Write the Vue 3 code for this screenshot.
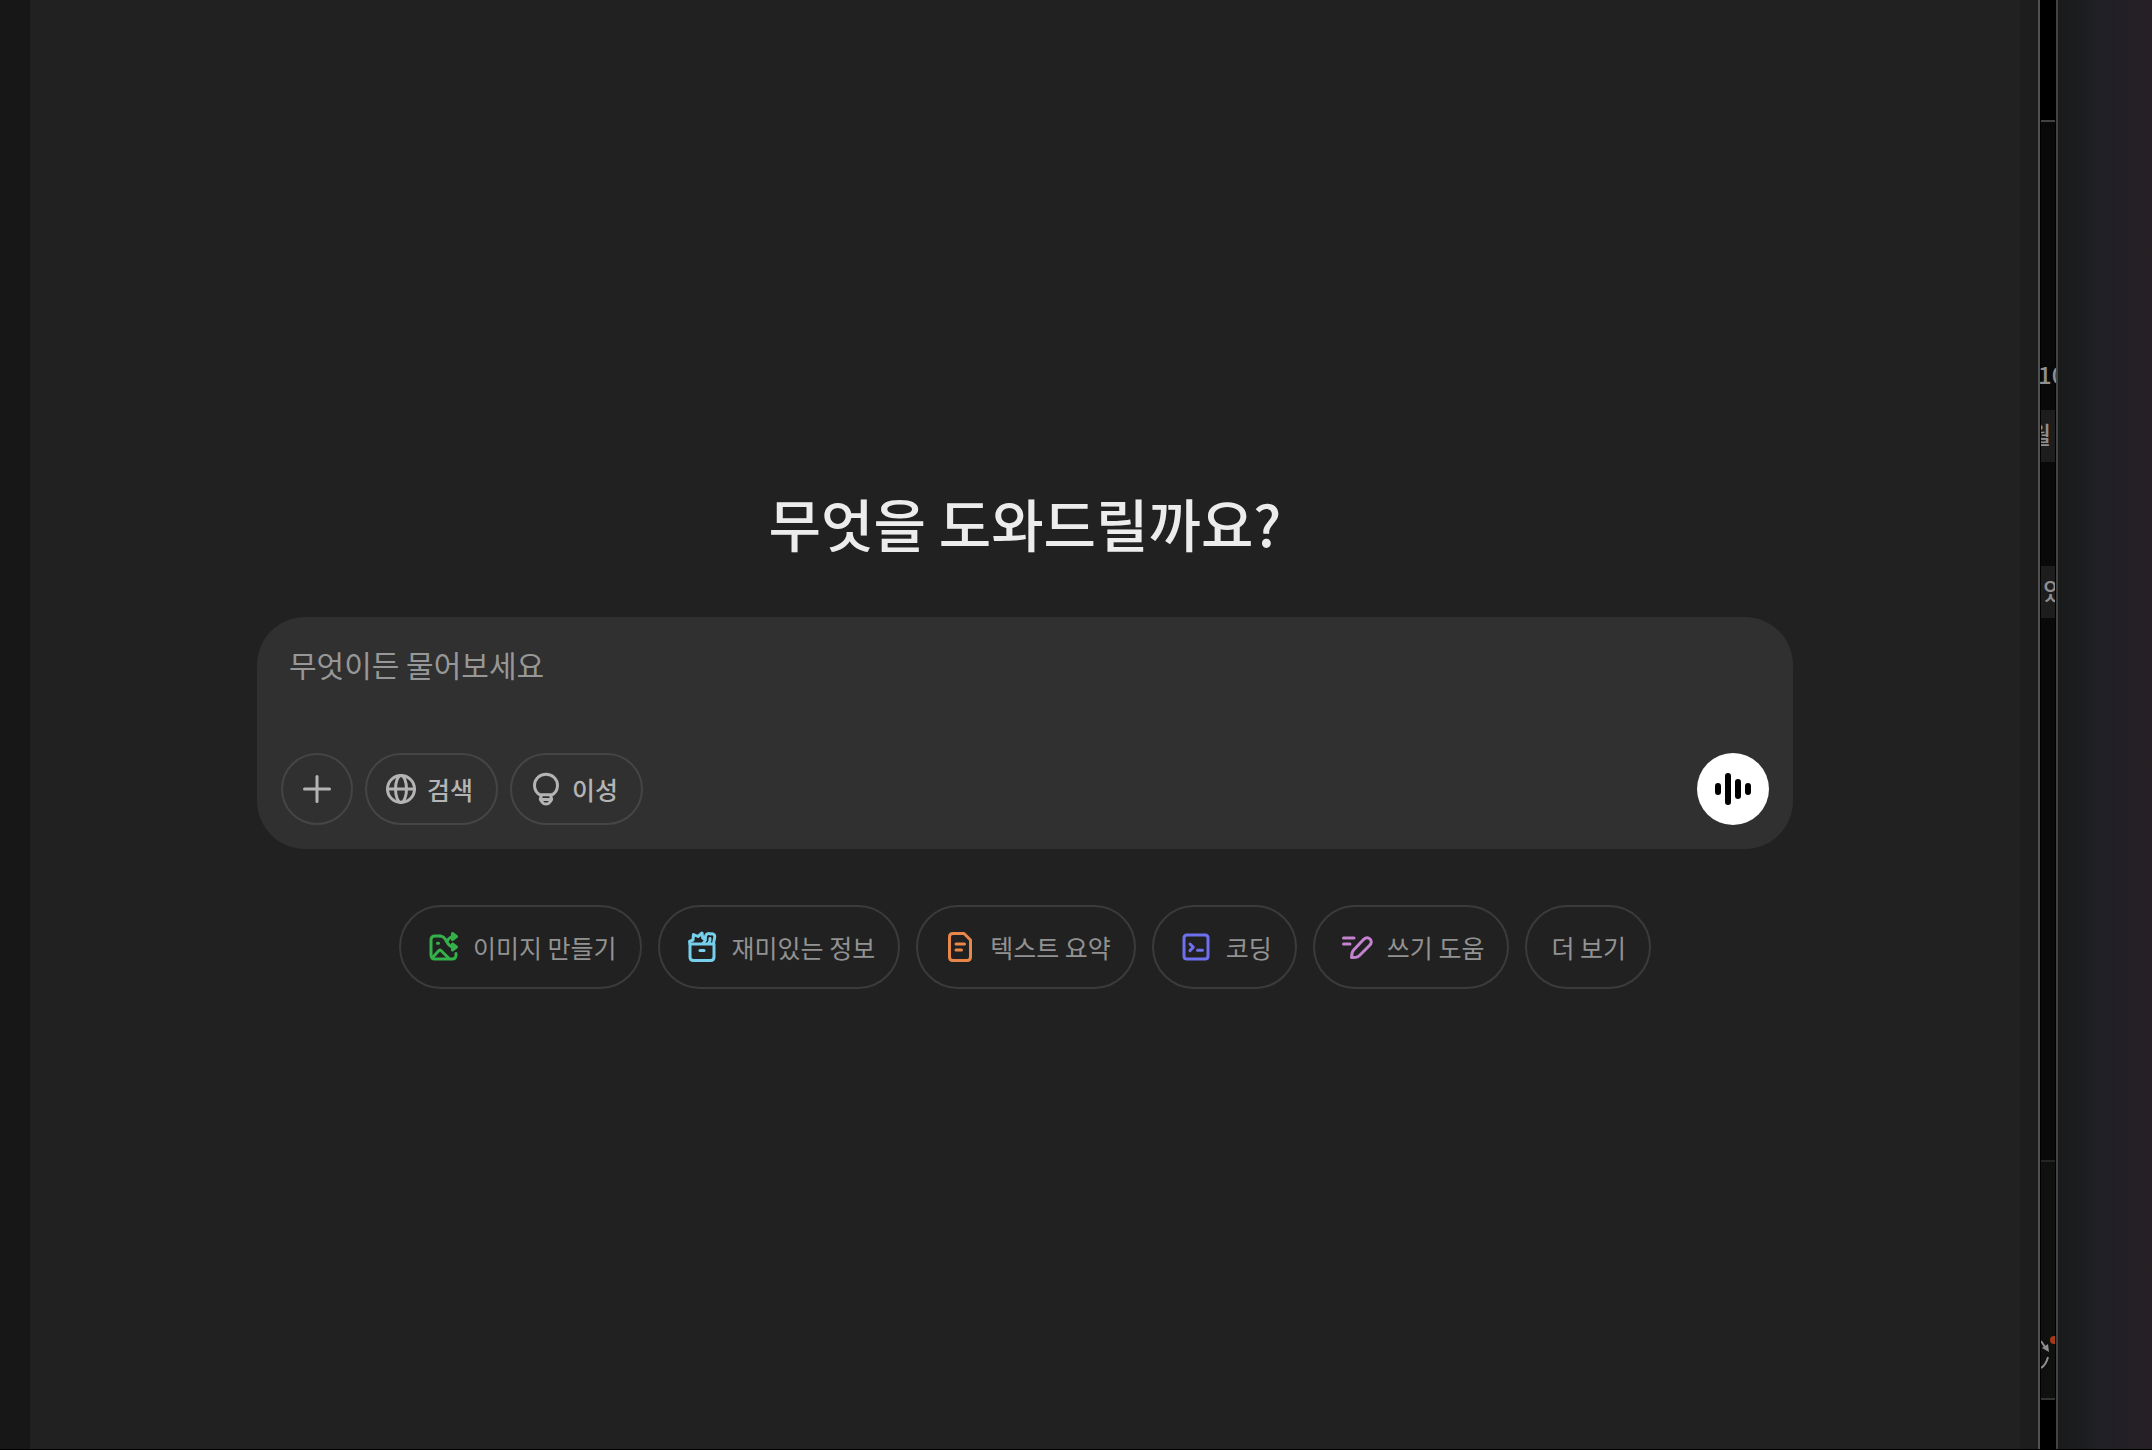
<script setup>
import { ref } from 'vue'

const prompt = ref('')

const suggestions = [
  {
    label: '이미지 만들기',
    color: '#35b04a',
    paths: [
      'M15 7H10Q6 7 6 11V26Q6 30 10 30H27Q31 30 31 26V24.500',
      'M8 28L14 21.500Q15 20.500 16 21.500L24 29.500',
      'M15 7C23 7 20 18 29 18',
      'M22 12.500C24 8.500 26 7.500 29 7.500',
      'M27.500 4.500L31.500 7.500L27.500 10.500ZM27.500 15L31.500 18L27.500 21Z',
      'M12.500 14.200H13.500',
    ],
  },
  {
    label: '재미있는 정보',
    color: '#76d0eb',
    paths: [
      'M6 15H30V28Q30 31.500 26.500 31.500H9.500Q6 31.500 6 28Z',
      'M16 21.500H20',
      'M6 15L5.500 12.500L9 11L9.500 5.500L14 7.500L18 4L18.700 9L21.500 11L19 14.500',
      'M21.500 9C21 5 24.500 3.800 26.500 5C30 4 31.500 6.500 30.500 9.500L29.500 14.500M26 9.500Q26.500 12 24.500 14.500',
    ],
  },
  {
    label: '텍스트 요약',
    color: '#e9864a',
    paths: [
      'M22 4.500H11Q7.500 4.500 7.500 8V28Q7.500 31.500 11 31.500H25Q28.500 31.500 28.500 28V11Z',
      'M14 15H22.500M14 21H19.500',
    ],
  },
  {
    label: '코딩',
    color: '#6f70ee',
    paths: [
      'M9 6H27Q30 6 30 9V27Q30 30 27 30H9Q6 30 6 27V9Q6 6 9 6Z',
      'M12 15L15.300 18.300L12 21.600M19.500 21.300H24.500',
    ],
  },
  {
    label: '쓰기 도움',
    color: '#c583cf',
    paths: [
      'M4.500 9H15M4.500 15H11',
      'M12.500 28.500L13 24.500Q13.300 22.500 14.700 21L24.500 10.500C26.500 8.300 29 8 31 10C33 12 32.500 14.500 30.500 16.500L20.500 26.500Q19 28 17 28.300Z',
    ],
  },
  { label: '더 보기' },
]
</script>

<template>
  <div class="desktop">
    <aside class="sidebar"></aside>

    <main class="chat">
      <h1>무엇을 도와드릴까요?</h1>

      <form class="composer" @submit.prevent>
        <textarea v-model="prompt" rows="1" aria-label="메시지" placeholder="무엇이든 물어보세요"></textarea>
        <div class="tools">
          <button type="button" class="tool round" aria-label="추가">
            <svg viewBox="0 0 36 36"><path d="M18 5.500V30.500M5.500 18H30.500" /></svg>
          </button>
          <button type="button" class="tool">
            <svg viewBox="0 0 36 36">
              <circle cx="18" cy="18" r="13.500" />
              <ellipse cx="18" cy="18" rx="5.500" ry="13.500" />
              <path d="M4.500 18H31.500" />
            </svg>
            검색
          </button>
          <button type="button" class="tool">
            <svg viewBox="0 0 36 36">
              <path d="M13 24.500C9 22.500 6.500 19 6.500 14.500C6.500 8 11.500 3.300 18 3.300S29.500 8 29.500 14.500C29.500 19 27 22.500 23 24.500" />
              <path d="M13 23.800H23V26.500C25 29 22.500 29.500 21.500 31.500Q20.500 33 18 33T14.500 31.500C13.500 29.500 11 29 13 26.500ZM13 28.500H23" />
            </svg>
            이성
          </button>
          <button type="button" class="voice" aria-label="음성 모드">
            <svg viewBox="0 0 36 36">
              <path d="M3 15V21M13 5V31M23 11V25M33 15V21" />
            </svg>
          </button>
        </div>
      </form>

      <div class="suggestions">
        <button v-for="item in suggestions" :key="item.label" type="button" class="chip">
          <svg v-if="item.paths" viewBox="0 0 36 36" :style="{ color: item.color }">
            <path v-for="d in item.paths" :key="d" :d="d" />
          </svg>
          {{ item.label }}
        </button>
      </div>
    </main>

    <div class="window-edge"></div>

    <div class="behind">
      <div class="behind-header"></div>
      <div class="behind-body">
        <span class="count">10</span>
        <span class="tile month">월</span>
        <span class="tile">있</span>
      </div>
      <div class="behind-panel">
        <svg viewBox="0 0 14 40">
          <circle class="dot" cx="13" cy="10" r="4" />
          <path d="M0 11L4 17M0 38Q5 35 7 27" />
          <path class="head" d="M8 22L1 18L7 14Z" />
        </svg>
      </div>
      <div class="behind-footer"></div>
    </div>

    <div class="wallpaper"></div>
  </div>
</template>

<style>
body {
  margin: 0;
  background: #000;
}
</style>

<style scoped>
.desktop {
  display: flex;
  box-sizing: border-box;
  height: 100vh;
  border-bottom: 1px solid #000;
  overflow: hidden;
  font-family: "Noto Sans CJK KR", sans-serif;
}

.sidebar {
  flex: 0 0 30px;
  background: #171717;
}

.chat {
  flex: 1;
  display: flex;
  flex-direction: column;
  align-items: center;
  justify-content: center;
  box-sizing: border-box;
  padding: 30px 24px 0;
  background: #212121;
}

h1 {
  margin: 0 0 63px;
  color: #ececec;
  font-size: 57px;
  font-weight: 500;
  line-height: 64px;
}

.composer {
  display: flex;
  flex-direction: column;
  justify-content: space-between;
  box-sizing: border-box;
  width: 100%;
  max-width: 1536px;
  min-height: 232px;
  padding: 24px;
  border-radius: 48px;
  background: #303030;
}

textarea {
  display: block;
  height: 46px;
  padding: 0 8px;
  border: 0;
  outline: 0;
  resize: none;
  background: transparent;
  color: #ececec;
  font: inherit;
  font-size: 30px;
  line-height: 46px;
}

textarea::placeholder {
  color: #979797;
  opacity: 1;
}

.tools {
  display: flex;
  gap: 12px;
}

button {
  display: flex;
  align-items: center;
  justify-content: center;
  box-sizing: border-box;
  border: 2px solid #454545;
  border-radius: 42px;
  background: transparent;
  font: inherit;
  font-size: 25px;
  white-space: nowrap;
  cursor: pointer;
}

svg {
  width: 36px;
  height: 36px;
  fill: none;
  stroke: currentColor;
  stroke-width: 3;
  stroke-linecap: round;
  stroke-linejoin: round;
}

.tool {
  gap: 8px;
  height: 72px;
  padding: 0 23px 0 16px;
  color: #b4b4b4;
  font-weight: 500;
}

.round {
  width: 72px;
  padding: 0;
}

.voice {
  width: 72px;
  height: 72px;
  margin-left: auto;
  padding: 0;
  border: 0;
  background: #fff;
  color: #000;
}

.voice svg {
  stroke-width: 6;
}

.suggestions {
  display: flex;
  flex-wrap: wrap;
  justify-content: center;
  gap: 16px;
  margin-top: 56px;
}

.chip {
  gap: 12px;
  height: 84px;
  padding: 0 23px 0 24px;
  border-color: #3b3b3b;
  color: #929292;
}

.window-edge {
  flex: 0 0 18px;
  background: #1c1d1c;
  border-right: 2px solid #505050;
}

.behind {
  flex: 0 0 14px;
  display: flex;
  flex-direction: column;
  padding: 0 1px;
  overflow: hidden;
  background: #000;
  border-right: 2px solid #424242;
  color: #8f8f8f;
  font-size: 24px;
  font-weight: 500;
  line-height: 48px;
}

.behind-header {
  height: 120px;
  border-bottom: 2px solid #424242;
}

.behind-body {
  flex: 1;
  display: flex;
  flex-direction: column;
  padding-top: 228px;
  background: #090909;
}

.count {
  height: 60px;
  margin-left: -3px;
}

.tile {
  height: 52px;
  margin-bottom: 104px;
  padding-left: 2px;
  overflow: hidden;
  background: #1c1d1c;
}

.month {
  display: flex;
  justify-content: flex-end;
  padding: 0 4px 0 0;
}

.behind-panel {
  display: flex;
  align-items: flex-end;
  box-sizing: border-box;
  height: 240px;
  padding-bottom: 28px;
  border-top: 2px solid #242524;
  border-bottom: 2px solid #333;
  background: #0f110e;
}

.behind-panel svg {
  flex: none;
  width: 14px;
  height: 40px;
  stroke-width: 2;
  stroke-linecap: butt;
}

.behind-panel .dot {
  fill: #a33a16;
  stroke: none;
}

.behind-panel .head {
  fill: currentColor;
  stroke: none;
}

.behind-footer {
  height: 49px;
}

.wallpaper {
  flex: 0 0 94px;
  background: linear-gradient(90deg, #191a1a, #1c1d1f 24px, #202025 40px, #221f25 60px, #262025);
}
</style>
